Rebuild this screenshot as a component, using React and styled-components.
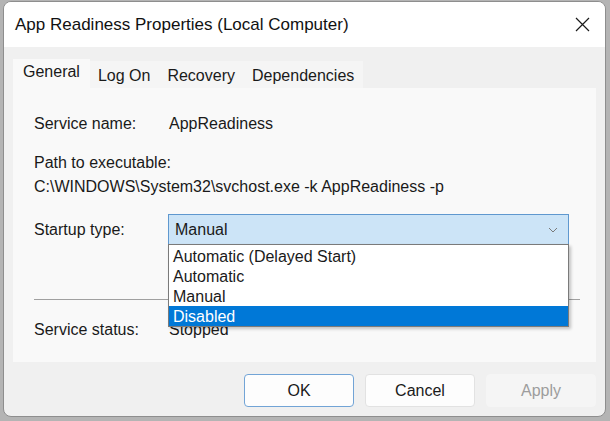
import styled, { createGlobalStyle } from "styled-components";

const GlobalStyle = createGlobalStyle`
  html, body {
    margin: 0;
    padding: 0;
    background: #b4b4b4;
    font-family: "Liberation Sans", Arial, sans-serif;
    color: #1a1a1a;
  }
  * { box-sizing: border-box; }
`;

const Window = styled.div`
  margin: 1px 4px 0 3px;
  width: 603px;
  height: 416px;
  border: 1px solid #8e8e8e;
  border-radius: 8px;
  overflow: hidden;
  display: flex;
  flex-direction: column;
  background: #f0f0f0;
`;

const TitleBar = styled.div`
  height: 45px;
  flex: none;
  background: #ffffff;
  display: flex;
  align-items: center;
  justify-content: space-between;
  padding: 0 15px 0 11px;
`;

const Title = styled.span`
  font-size: 17px;
  color: #111;
`;

const CloseButton = styled.div`
  width: 16px;
  height: 16px;
  display: flex;
  align-items: center;
  justify-content: center;
`;

const Content = styled.div`
  flex: 1;
  display: flex;
  flex-direction: column;
  padding: 12px 9px 0 9px;
`;

const TabStrip = styled.div`
  display: flex;
  align-items: flex-end;
  height: 29px;
`;

const Tab = styled.div`
  font-size: 16px;
  line-height: 20px;
  height: ${(p) => (p.$active ? "29px" : "27px")};
  padding: ${(p) => (p.$active ? "3px 10px 0 10px" : "5px 9px 0 8px")};
  background: ${(p) => (p.$active ? "#f9f9f9" : "#f5f5f5")};
  color: #1a1a1a;
`;

const Panel = styled.div`
  height: 274px;
  background: #f9f9f9;
  padding: 26px 0 0 21px;
  font-size: 16px;
  line-height: 20px;
`;

const InfoRow = styled.div`
  display: grid;
  grid-template-columns: ${(p) => p.$cols || "135px 1fr"};
  align-items: center;
  margin-top: ${(p) => p.$gap || 0}px;
`;

const Line = styled.div`
  margin-top: ${(p) => p.$gap || 0}px;
`;

const Combo = styled.div`
  position: relative;
  width: 401px;
  height: 31px;
  border: 1px solid #5f98cf;
  background: #cce4f7;
  display: flex;
  align-items: center;
  justify-content: space-between;
  padding: 0 10px 0 6px;
`;

const DropList = styled.div`
  position: absolute;
  top: 100%;
  left: -1px;
  width: 401px;
  padding-top: 1px;
  background: #ffffff;
  border: 1px solid #7a7a7a;
  box-shadow: 2px 2px 3px rgba(0, 0, 0, 0.22);
  z-index: 2;
`;

const Option = styled.div`
  height: 20px;
  line-height: 21px;
  padding-left: 4px;
  background: ${(p) => (p.$selected ? "#0078d7" : "transparent")};
  color: ${(p) => (p.$selected ? "#ffffff" : "#1a1a1a")};
`;

const Separator = styled.div`
  height: 1px;
  background: #a0a0a0;
  margin: 54px 16px 0 0;
`;

const ButtonRow = styled.div`
  display: flex;
  justify-content: flex-end;
  gap: 11px;
  margin-top: 12px;
`;

const Button = styled.button`
  width: 110px;
  height: 33px;
  font-family: "Liberation Sans", Arial, sans-serif;
  font-size: 16px;
  border-radius: 4px;
  background: ${(p) => (p.$disabled ? "#f5f5f5" : "#fdfdfd")};
  color: ${(p) => (p.$disabled ? "#9d9d9d" : "#1a1a1a")};
  border: 1px solid
    ${(p) => (p.$primary ? "#72a4d6" : p.$disabled ? "#f5f5f5" : "#e2e2e2")};
  padding: 0;
`;

const options = ["Automatic (Delayed Start)", "Automatic", "Manual", "Disabled"];

export default function App() {
  return (
    <>
      <GlobalStyle />
      <Window>
        <TitleBar>
          <Title>App Readiness Properties (Local Computer)</Title>
          <CloseButton>
            <svg width="15" height="15" viewBox="0 0 15 15">
              <path d="M1 1 L14 14 M14 1 L1 14" stroke="#1a1a1a" strokeWidth="1.2" />
            </svg>
          </CloseButton>
        </TitleBar>
        <Content>
          <TabStrip>
            <Tab $active>General</Tab>
            <Tab>Log On</Tab>
            <Tab>Recovery</Tab>
            <Tab>Dependencies</Tab>
          </TabStrip>
          <Panel>
            <InfoRow>
              <span>Service name:</span>
              <span>AppReadiness</span>
            </InfoRow>
            <Line $gap={19}>Path to executable:</Line>
            <Line $gap={4}>C:\WINDOWS\System32\svchost.exe -k AppReadiness -p</Line>
            <InfoRow $gap={17} $cols="134px 401px">
              <span>Startup type:</span>
              <Combo>
                <span>Manual</span>
                <svg width="10" height="6" viewBox="0 0 10 6">
                  <polyline points="1,1 5,5 9,1" fill="none" stroke="#7a7a7a" strokeWidth="1" />
                </svg>
                <DropList>
                  {options.map((o) => (
                    <Option key={o} $selected={o === "Disabled"}>
                      {o}
                    </Option>
                  ))}
                </DropList>
              </Combo>
            </InfoRow>
            <Separator />
            <InfoRow $gap={20}>
              <span>Service status:</span>
              <span>Stopped</span>
            </InfoRow>
          </Panel>
          <ButtonRow>
            <Button $primary>OK</Button>
            <Button>Cancel</Button>
            <Button $disabled>Apply</Button>
          </ButtonRow>
        </Content>
      </Window>
    </>
  );
}
